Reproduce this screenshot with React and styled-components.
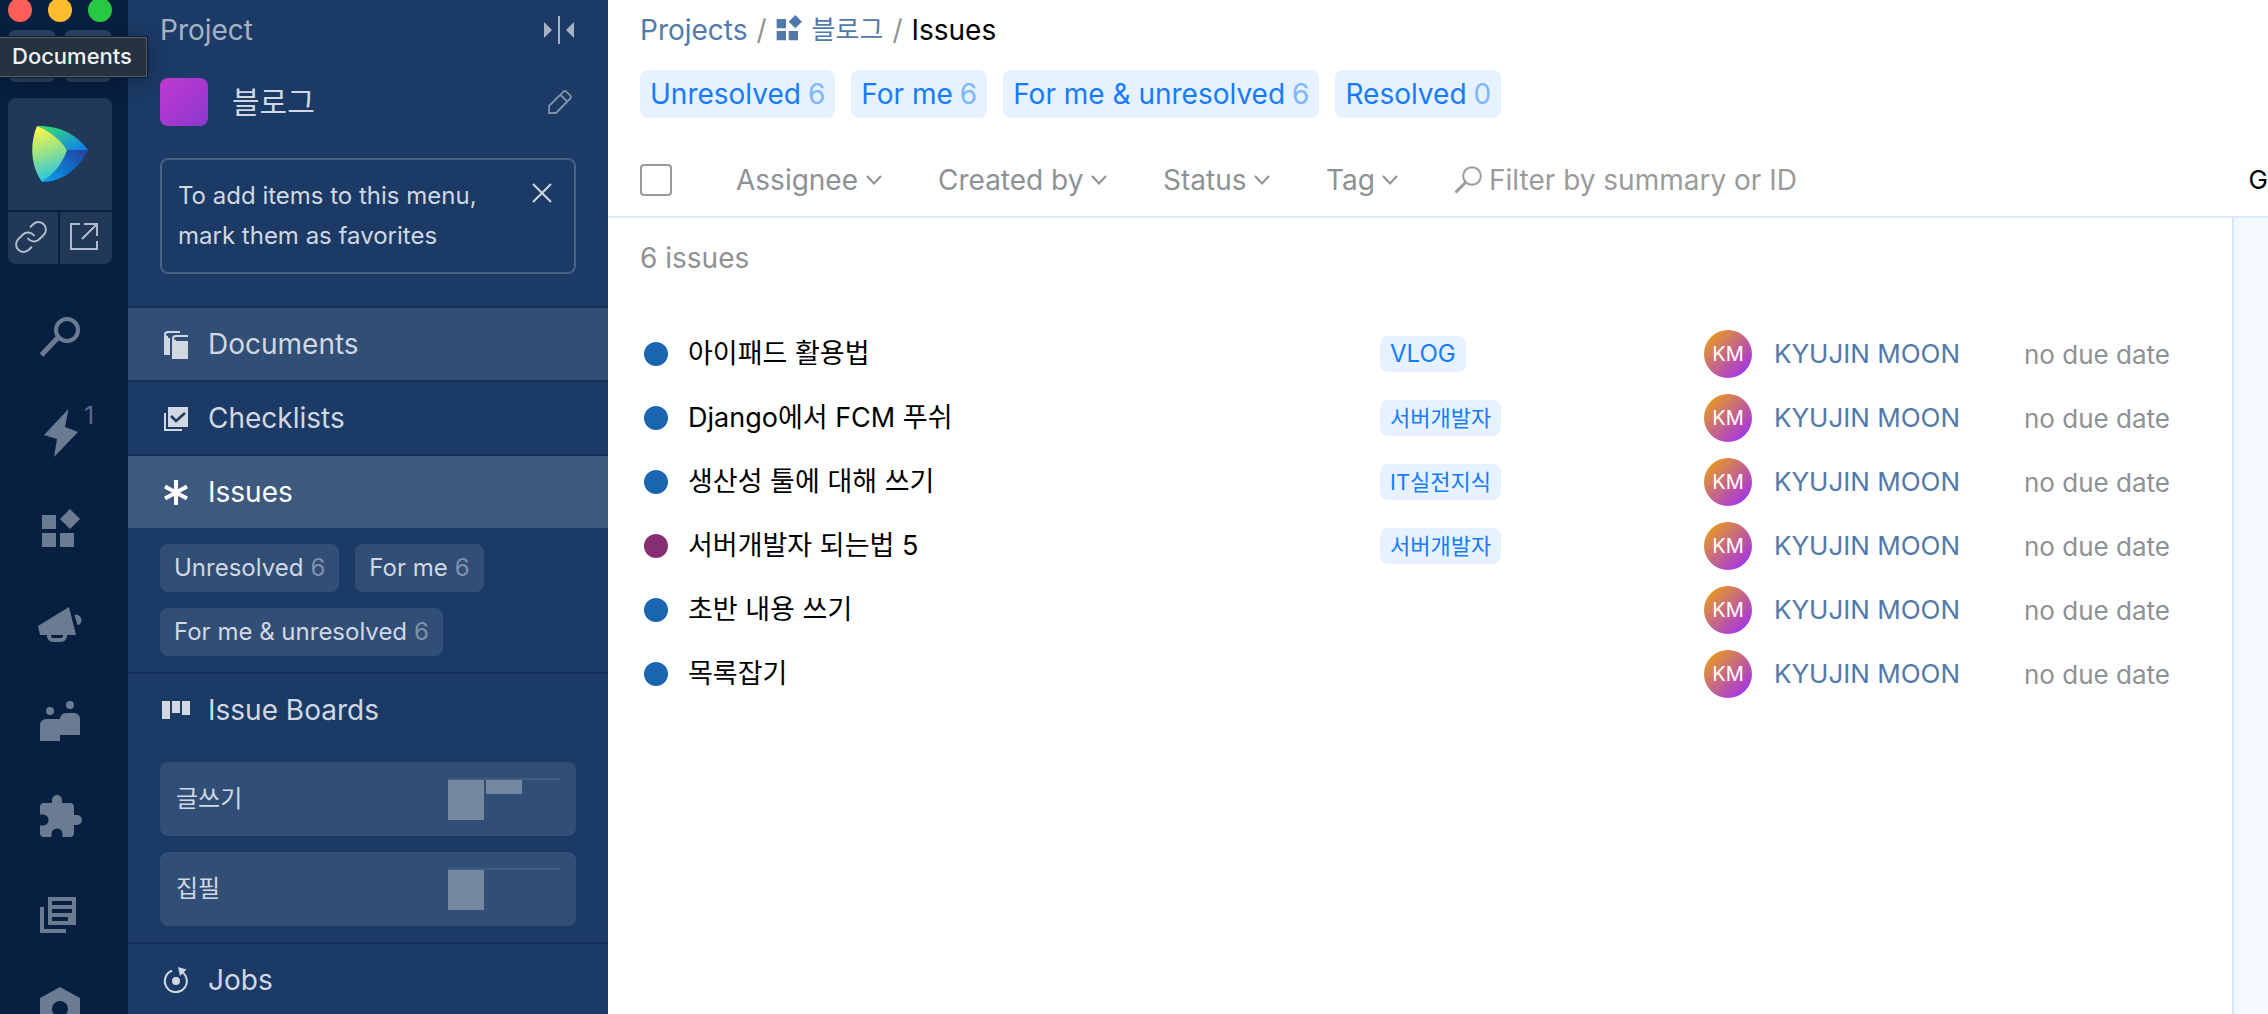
import React from "react";
import styled, { createGlobalStyle } from "styled-components";
import { Link } from "lucide-react";

const GlobalStyle = createGlobalStyle`
  *, *::before, *::after { box-sizing: border-box; }
  body {
    margin: 0;
    background: #fff;
    font-family: Inter, "Noto Sans CJK KR", sans-serif;
    font-size: 28px;
    line-height: 40px;
    color: #000;
  }
  button, input, select { font: inherit; color: inherit; }
  button { border: 0; padding: 0; background: none; cursor: pointer; }
  a { color: inherit; text-decoration: none; }
  svg { display: block; flex: none; overflow: visible; }
`;

const Shell = styled.div`
  display: flex;
  height: 100vh;
  overflow: hidden;
`;

/* Rail */
const Rail = styled.nav`
  position: relative;
  flex: none;
  width: 128px;
  padding: 0 16px 0 8px;
  background: #072042;
  color: #6b7c92;
`;

const Lights = styled.div`
  display: flex;
  gap: 16px;
  margin-top: -2px;
`;

const Light = styled.span`
  width: 24px;
  height: 24px;
  border-radius: 50%;
  background: ${(p) => p.$color};
`;

const NavPair = styled.div`
  display: grid;
  grid-template-columns: 1fr 1fr;
  gap: 8px;
  margin: 8px 0 16px;
`;

const NavButton = styled.button`
  height: 52px;
  border-radius: 8px;
  background: #2b4260;
`;

const OrgCard = styled.div`
  display: grid;
  grid-template-columns: 50px 1fr;
  gap: 2px;
  margin-bottom: 24px;
  border-radius: 8px;
  overflow: hidden;
  color: #b2bdca;
`;

const OrgButton = styled.button`
  display: flex;
  align-items: center;
  justify-content: center;
  height: ${(p) => (p.$wide ? 112 : 52)}px;
  padding: ${(p) => (p.$wide ? "0" : "0 4px 2px 0")};
  grid-column: ${(p) => (p.$wide ? "1 / -1" : "auto")};
  background: #213857;
`;

const RailLink = styled.a`
  position: relative;
  display: flex;
  align-items: center;
  justify-content: center;
  height: 96px;
`;

const RailCount = styled.span`
  position: absolute;
  top: 12px;
  right: 18px;
  color: #5d6e85;
  font-size: 24px;
`;

const Tooltip = styled.div`
  position: absolute;
  z-index: 2;
  top: 37px;
  left: -1px;
  padding: 0 14px 2px 12px;
  border: 1px solid #56606b;
  outline: 1px solid #0c1b30;
  background: #263240;
  box-shadow: 0 4px 20px rgba(0, 0, 0, 0.3);
  color: #f0f1f3;
  font-size: 22px;
  font-weight: 500;
  line-height: 36px;
`;

/* Project sidebar */
const Sidebar = styled.aside`
  flex: none;
  width: 480px;
  background: #1b3a65;
  color: #d1d8e1;
`;

const SidebarHead = styled.header`
  display: flex;
  align-items: center;
  justify-content: space-between;
  height: 60px;
  padding: 0 32px;
  color: #a6b2c4;
`;

const ProjectRow = styled.div`
  display: flex;
  align-items: center;
  gap: 24px;
  padding: 18px 32px 32px;
`;

const ProjectIcon = styled.span`
  width: 48px;
  height: 48px;
  border-radius: 8px;
  background: linear-gradient(135deg, #c13ad0, #8c37cf);
`;

const ProjectName = styled.h1`
  flex: 1;
  margin: 0;
  font-size: 30px;
  font-weight: 400;
  line-height: 48px;
`;

const EditButton = styled.button`
  padding-right: 4px;
  color: #8293ab;
`;

const Hint = styled.div`
  display: flex;
  align-items: flex-start;
  justify-content: space-between;
  margin: 0 32px 32px;
  padding: 16px 22px 16px 16px;
  border: 2px solid #496184;
  border-radius: 8px;
`;

const HintText = styled.p`
  margin: 0;
  width: 320px;
  font-size: 24px;
`;

const CloseButton = styled.button`
  padding-top: 7px;
`;

const Section = styled.section`
  border-top: 2px solid #14305a;
`;

const SectionLink = styled.a`
  display: flex;
  align-items: center;
  gap: 16px;
  height: 72px;
  padding: 0 32px;
  background: ${(p) => p.$bg || "transparent"};
  color: ${(p) => (p.$active ? "#fff" : "inherit")};
`;

const PillList = styled.div`
  display: flex;
  flex-wrap: wrap;
  gap: 16px;
  padding: 16px 32px;
`;

const Pill = styled.button`
  display: flex;
  align-items: center;
  gap: 7px;
  height: 48px;
  padding: 0 14px;
  border-radius: 8px;
  background: #304e76;
  font-size: 24px;
`;

const PillCount = styled.span`
  color: #8092ab;
`;

const BoardList = styled.div`
  display: grid;
  gap: 16px;
  padding: 16px 32px;
`;

const Board = styled.a`
  display: flex;
  justify-content: space-between;
  padding: 16px;
  border-radius: 8px;
  background: #304e76;
  font-size: 24px;
  line-height: 42px;
`;

const BoardPreview = styled.span`
  display: grid;
  grid-template-columns: repeat(3, 36px);
  align-items: start;
  gap: 2px;
  border-top: 2px solid #405b80;
`;

const BoardBar = styled.span`
  background: #7488a2;
`;

/* Main */
const Main = styled.main`
  display: flex;
  flex-direction: column;
  flex: 1;
  min-width: 0;
`;

const Crumbs = styled.nav`
  display: flex;
  align-items: center;
  gap: 9px;
  height: 60px;
  padding-left: 32px;
  color: #5179a9;
`;

const CrumbProject = styled.a`
  display: flex;
  align-items: center;
  gap: 10px;
  font-size: 26px;
`;

const Slash = styled.span`
  color: #8d9296;
`;

const CrumbCurrent = styled.span`
  color: #000;
`;

const Chips = styled.div`
  display: flex;
  gap: 16px;
  padding: 10px 32px 26px;
`;

const Chip = styled.button`
  display: flex;
  align-items: center;
  gap: 7px;
  height: 48px;
  padding: 0 10px;
  border-radius: 8px;
  background: #e6f2ff;
  color: #167bff;
`;

const ChipCount = styled.span`
  color: #80b6ff;
`;

const Toolbar = styled.div`
  display: flex;
  align-items: center;
  gap: 56px;
  height: 74px;
  padding-left: 32px;
  border-bottom: 2px solid #dcecfe;
  color: #8d9296;
`;

const Check = styled.input`
  appearance: none;
  flex: none;
  width: 32px;
  height: 32px;
  margin: 0 8px 0 0;
  border: 2px solid #999;
  border-radius: 4px;
  background: #fff;
`;

const Filter = styled.label`
  display: flex;
  align-items: center;
  gap: 7px;
`;

const FilterSelect = styled.select`
  appearance: none;
  padding: 0;
  border: 0;
  background: none;
  line-height: 40px;
`;

const Search = styled.label`
  display: flex;
  flex: 1;
  align-items: center;
  gap: 7px;
  color: #9b9b9b;
`;

const SearchInput = styled.input`
  flex: 1;
  min-width: 0;
  padding: 0;
  border: 0;
  outline: 0;
  background: none;
  &::placeholder { color: #9b9b9b; opacity: 1; }
`;

const GroupButton = styled.button`
  color: #000;
  font-size: 26px;
`;

const Content = styled.div`
  display: flex;
  flex: 1;
  min-height: 0;
`;

const List = styled.section`
  flex: 1;
  min-width: 0;
  padding-top: 20px;
`;

const SidePanel = styled.aside`
  flex: none;
  width: 36px;
  border-left: 2px solid #d3e6fb;
  background: #f4f9ff;
`;

const Total = styled.p`
  margin: 0 32px 44px;
  color: #8d9296;
`;

const Table = styled.table`
  width: 100%;
  table-layout: fixed;
  border-collapse: collapse;
`;

const Col = styled.col`
  width: ${(p) => p.$width};
`;

const Cell = styled.td`
  height: 64px;
  padding: 0;
  vertical-align: middle;
`;

const Issue = styled.a`
  display: flex;
  align-items: center;
  gap: 20px;
  padding-left: 36px;
  font-size: 27px;
  line-height: 36px;
`;

const Dot = styled.span`
  flex: none;
  width: 24px;
  height: 24px;
  border-radius: 50%;
  background: ${(p) => p.$color};
`;

const Tag = styled.span`
  display: block;
  width: fit-content;
  padding: 0 10px;
  border-radius: 8px;
  background: #e6f2ff;
  color: #167bff;
  font-size: ${(p) => (p.$latin ? 24 : 22)}px;
  line-height: 36px;
`;

const Person = styled.a`
  display: flex;
  align-items: center;
  gap: 22px;
  color: #5179a9;
  font-size: 26px;
`;

const Avatar = styled.span`
  width: 48px;
  border-radius: 50%;
  background: linear-gradient(135deg, #e79c22 10%, #a431eb 90%);
  color: #fff;
  font-size: 20px;
  line-height: 48px;
  text-align: center;
`;

const Due = styled.span`
  color: #8d9296;
  font-size: 26px;
`;

/* Icons */
const RailSvg = ({ children }) => (
  <svg width="48" height="48" viewBox="0 0 48 48" fill="currentColor" aria-hidden="true">{children}</svg>
);
const MenuSvg = ({ children }) => (
  <svg width="32" height="32" viewBox="0 0 32 32" fill="currentColor" aria-hidden="true">{children}</svg>
);

const SpaceLogo = () => (
  <svg width="56" height="56" viewBox="0 0 56 56" aria-hidden="true">
    <defs>
      <linearGradient id="lg1" x1="0.3" y1="0" x2="0.5" y2="1">
        <stop offset="0" stopColor="#fcf84a" />
        <stop offset="0.5" stopColor="#8fe08c" />
        <stop offset="1" stopColor="#1cc4ee" />
      </linearGradient>
      <linearGradient id="lg2" x1="0" y1="0" x2="1" y2="1">
        <stop offset="0.1" stopColor="#2fdc72" />
        <stop offset="0.45" stopColor="#23b6ac" />
        <stop offset="1" stopColor="#0c79f2" />
      </linearGradient>
      <linearGradient id="lg3" x1="1" y1="0" x2="0" y2="1">
        <stop offset="0.1" stopColor="#2348a6" />
        <stop offset="0.5" stopColor="#0f6fc8" />
        <stop offset="1" stopColor="#0aa5ee" />
      </linearGradient>
    </defs>
    <path fill="url(#lg2)" d="M5 0C26-1 45 8 56 24H35C29 14 18 5 5 0Z" />
    <path fill="url(#lg3)" d="M56 24C46 45 28 56 10 56C22 48 31 37 35 24Z" />
    <path fill="url(#lg1)" d="M5 0C-2 17-2 39 10 56C22 48 31 37 35 24C29 14 18 5 5 0Z" />
  </svg>
);

const ExternalIcon = () => (
  <svg width="28" height="28" viewBox="0 0 28 28" fill="none" stroke="currentColor" strokeWidth="2" aria-hidden="true">
    <path d="M10 1H1v25h26v-8M14 1h13v12M27 1 12 16" />
  </svg>
);

const Tiles = () => (
  <>
    <path d="M6 11h14v14H6zM6 29h14v14H6zM24 29h14v14H24z" />
    <path d="m34 5 10 10-10 10-10-10z" />
  </>
);

const railItems = [
  { label: "Search", icon: <><circle cx="31" cy="18" r="11" fill="none" stroke="currentColor" strokeWidth="4" /><path d="M22 25.500 5.500 43" stroke="currentColor" strokeWidth="5" /></> },
  { label: "Activity", count: "1", icon: <path d="m32.500 1-3.500 18 13 5-24 25 3-18L8 27z" /> },
  { label: "Projects", icon: <Tiles /> },
  { label: "Blogs", icon: <><path d="M2 26 33 7l7 28H4z" /><path d="M13 34v2a4 4 0 0 0 4 4h8a4 4 0 0 0 4-4v-2" fill="none" stroke="currentColor" strokeWidth="4" /><path d="M38.500 15c4-1 7 2 7 5.500 0 2.500-2 4.500-4 4.500z" /></> },
  { label: "Teams", icon: <><circle cx="14" cy="15" r="4" /><circle cx="34" cy="9" r="4" /><path d="M4 45V29a6 6 0 0 1 6-6h14a6 6 0 0 1 6-6h8a6 6 0 0 1 6 6v16H24v6z" /></> },
  { label: "Extensions", icon: <path d="M8 11h8V8a5 5 0 0 1 10 0v3h8a4 4 0 0 1 4 4v8h3a5 5 0 0 1 0 10h-3v8a4 4 0 0 1-4 4h-7.500v-3a5.500 5.500 0 0 0-11 0v3H8a4 4 0 0 1-4-4v-7.500h3a5.500 5.500 0 0 0 0-11H4V15a4 4 0 0 1 4-4z" /> },
  { label: "Library", icon: <><path fillRule="evenodd" d="M12 9h28v28H12zM16 13v4h20v-4zM16 21v4h20v-4zM16 29v4h16v-4z" /><path d="M4 19h4v22h22v4H4z" /></> },
  { label: "Administration", icon: <path fillRule="evenodd" d="m24 3 20 11v22L24 47 4 36V14zM24 17a8 8 0 1 0 0 16 8 8 0 0 0 0-16z" /> },
];

const Chevron = () => (
  <svg width="16" height="10" viewBox="0 0 16 10" fill="none" stroke="currentColor" strokeWidth="2" aria-hidden="true">
    <path d="m1 1 7 7.500L15 1" />
  </svg>
);

const pills = [["Unresolved", 6], ["For me", 6], ["For me & unresolved", 6]];
const chips = [...pills, ["Resolved", 0]];
const boards = [
  { name: "글쓰기", bars: [40, 14] },
  { name: "집필", bars: [40] },
];
const issues = [
  { title: "아이패드 활용법", tag: "VLOG", latin: true },
  { title: "Django에서 FCM 푸쉬", tag: "서버개발자" },
  { title: "생산성 툴에 대해 쓰기", tag: "IT실전지식" },
  { title: "서버개발자 되는법 5", tag: "서버개발자", color: "#872f73" },
  { title: "초반 내용 쓰기" },
  { title: "목록잡기" },
];

export default function App() {
  return (
    <Shell>
      <GlobalStyle />
      <Rail aria-label="Main">
        <Lights>
          <Light $color="#ff5f57" />
          <Light $color="#ffbd2e" />
          <Light $color="#28c940" />
        </Lights>
        <NavPair>
          <NavButton aria-label="Back" />
          <NavButton aria-label="Forward" />
        </NavPair>
        <Tooltip role="tooltip">Documents</Tooltip>
        <OrgCard>
          <OrgButton $wide aria-label="Home"><SpaceLogo /></OrgButton>
          <OrgButton aria-label="Copy link"><Link size={36} strokeWidth={1.3} /></OrgButton>
          <OrgButton aria-label="Open in browser"><ExternalIcon /></OrgButton>
        </OrgCard>
        {railItems.map((item) => (
          <RailLink key={item.label} href="#" aria-label={item.label}>
            <RailSvg>{item.icon}</RailSvg>
            {item.count && <RailCount>{item.count}</RailCount>}
          </RailLink>
        ))}
      </Rail>

      <Sidebar>
        <SidebarHead>
          <span>Project</span>
          <button aria-label="Collapse sidebar">
            <svg width="32" height="30" viewBox="0 0 32 30" fill="currentColor" aria-hidden="true">
              <path d="M0 7v16l8-8zM14 1h2v28h-2zM30 7v16l-8-8z" />
            </svg>
          </button>
        </SidebarHead>
        <ProjectRow>
          <ProjectIcon />
          <ProjectName>블로그</ProjectName>
          <EditButton aria-label="Edit project">
            <svg width="24" height="24" viewBox="0 0 24 24" fill="none" stroke="currentColor" strokeWidth="1.8" aria-hidden="true">
              <path d="M1 23v-7L15.500 1.700a2 2 0 0 1 2.800 0l4 4a2 2 0 0 1 0 2.800L8 23zM12.500 4.800l6.700 6.700" />
            </svg>
          </EditButton>
        </ProjectRow>
        <Hint>
          <HintText>To add items to this menu, mark them as favorites</HintText>
          <CloseButton aria-label="Close hint">
            <svg width="20" height="20" viewBox="0 0 20 20" stroke="currentColor" strokeWidth="2" aria-hidden="true">
              <path d="m1 1 18 18M19 1 1 19" />
            </svg>
          </CloseButton>
        </Hint>

        <Section>
          <SectionLink href="#" $bg="#304e76">
            <MenuSvg>
              <path d="M20 4H8C4 4 4 9 8 9M28 8H16c-4 0-4 5 0 5" fill="none" stroke="currentColor" strokeWidth="2" />
              <path d="M4 7c1 2 2 3 6 3v17H4zM12 11c1 2 2 2 4 2h12v18H12z" />
            </MenuSvg>
            Documents
          </SectionLink>
        </Section>
        <Section>
          <SectionLink href="#">
            <MenuSvg>
              <path d="M8 5h20v20H8z" />
              <path d="M5 11v17h17" fill="none" stroke="currentColor" strokeWidth="2" />
              <path d="m11 14 5 5 9-8" fill="none" stroke="#1b3a65" strokeWidth="2.500" />
            </MenuSvg>
            Checklists
          </SectionLink>
        </Section>
        <Section>
          <SectionLink href="#" $bg="#3e597e" $active aria-current="page">
            <MenuSvg>
              <path d="M16 4v25M5 10.500l22 12M27 10.500l-22 12" stroke="currentColor" strokeWidth="4" />
            </MenuSvg>
            Issues
          </SectionLink>
          <PillList>
            {pills.map(([name, count]) => (
              <Pill key={name}>{name}<PillCount>{count}</PillCount></Pill>
            ))}
          </PillList>
        </Section>
        <Section>
          <SectionLink href="#">
            <MenuSvg><path d="M2 7h8v18H2zM12 7h8v12h-8zM22 7h8v14h-8z" /></MenuSvg>
            Issue Boards
          </SectionLink>
          <BoardList>
            {boards.map((board) => (
              <Board key={board.name} href="#">
                {board.name}
                <BoardPreview>
                  {board.bars.map((height, i) => <BoardBar key={i} style={{ height }} />)}
                </BoardPreview>
              </Board>
            ))}
          </BoardList>
        </Section>
        <Section>
          <SectionLink href="#">
            <MenuSvg>
              <circle cx="16" cy="17" r="4" />
              <path d="M12 6.800A11 11 0 1 0 22 8" fill="none" stroke="currentColor" strokeWidth="2" />
              <path d="m18 3 8.500 2.500L20 12z" />
            </MenuSvg>
            Jobs
          </SectionLink>
        </Section>
      </Sidebar>

      <Main>
        <Crumbs aria-label="Breadcrumb">
          <a href="#">Projects</a>
          <Slash>/</Slash>
          <CrumbProject href="#">
            <svg width="26" height="30" viewBox="5 5 39 45" fill="currentColor" aria-hidden="true"><Tiles /></svg>
            블로그
          </CrumbProject>
          <Slash>/</Slash>
          <CrumbCurrent>Issues</CrumbCurrent>
        </Crumbs>
        <Chips>
          {chips.map(([name, count]) => (
            <Chip key={name}>{name}<ChipCount>{count}</ChipCount></Chip>
          ))}
        </Chips>
        <Toolbar>
          <Check type="checkbox" aria-label="Select all issues" />
          {["Assignee", "Created by", "Status", "Tag"].map((name) => (
            <Filter key={name}>
              <FilterSelect aria-label={name}><option>{name}</option></FilterSelect>
              <Chevron />
            </Filter>
          ))}
          <Search>
            <svg width="28" height="28" viewBox="0 0 28 28" fill="none" stroke="currentColor" aria-hidden="true">
              <circle cx="18" cy="10" r="8.800" strokeWidth="2" />
              <path d="M11.500 16.500 1.500 26.500" strokeWidth="3" />
            </svg>
            <SearchInput aria-label="Filter issues" placeholder="Filter by summary or ID" />
          </Search>
          <GroupButton>G</GroupButton>
        </Toolbar>
        <Content>
          <List>
            <Total>6 issues</Total>
            <Table aria-label="Issues">
              <colgroup>
                <Col $width="auto" />
                <Col $width="324px" />
                <Col $width="320px" />
                <Col $width="208px" />
              </colgroup>
              <tbody>
                {issues.map((issue) => (
                  <tr key={issue.title}>
                    <Cell>
                      <Issue href="#"><Dot $color={issue.color || "#1a66b0"} />{issue.title}</Issue>
                    </Cell>
                    <Cell>{issue.tag && <Tag $latin={issue.latin}>{issue.tag}</Tag>}</Cell>
                    <Cell>
                      <Person href="#"><Avatar>KM</Avatar>KYUJIN MOON</Person>
                    </Cell>
                    <Cell><Due>no due date</Due></Cell>
                  </tr>
                ))}
              </tbody>
            </Table>
          </List>
          <SidePanel />
        </Content>
      </Main>
    </Shell>
  );
}
